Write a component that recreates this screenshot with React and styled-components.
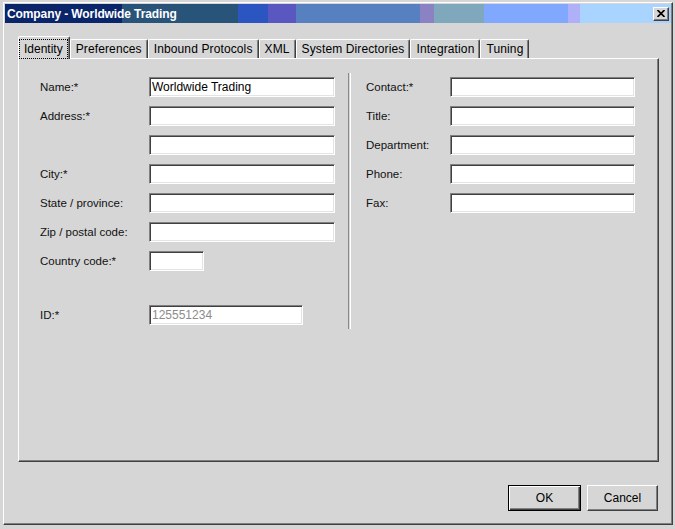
import React from 'react';
import styled, { createGlobalStyle } from 'styled-components';

const GlobalStyle = createGlobalStyle`
  html, body {
    margin: 0;
    padding: 0;
    background: #d6d6d6;
  }
  body {
    font-family: "Liberation Sans", Arial, sans-serif;
    color: #000;
  }
`;

const Window = styled.div`
  box-sizing: border-box;
  width: 670px;
  height: 523px;
  margin: 2px 0 0 3px;
  padding: 1px;
  display: flex;
  flex-direction: column;
  background: #d6d6d6;
  border: 1px solid;
  border-color: #ffffff #404040 #404040 #ffffff;
  box-shadow: inset -1px -1px 0 #808080;
`;

const TitleBar = styled.div`
  height: 19px;
  display: flex;
  align-items: center;
  padding-left: 2px;
  background: linear-gradient(
    to right,
    #0b256b 0px, #0b256b 117px,
    #29547a 117px, #29547a 233px,
    #2b55c0 233px, #2b55c0 263px,
    #5a58c0 263px, #5a58c0 291px,
    #5680c0 291px, #5680c0 415px,
    #8a82c2 415px, #8a82c2 429px,
    #80a8bc 429px, #80a8bc 479px,
    #80a8ff 479px, #80a8ff 563px,
    #b0b0f8 563px, #b0b0f8 575px,
    #a8d4ff 575px, #a8d4ff 100%
  );
`;

const TitleText = styled.span`
  color: #fff;
  font-weight: bold;
  font-size: 12px;
  letter-spacing: -0.1px;
  white-space: nowrap;
`;

const CloseButton = styled.div`
  box-sizing: border-box;
  margin-left: auto;
  margin-right: 2px;
  width: 16px;
  height: 14px;
  display: flex;
  align-items: center;
  justify-content: center;
  background: #d6d6d6;
  border: 1px solid;
  border-color: #ffffff #404040 #404040 #ffffff;
  box-shadow: inset -1px -1px 0 #808080;
`;

const Body = styled.div`
  flex: 1;
  display: flex;
  flex-direction: column;
  padding: 13px 12px 0 13px;
`;

const TabStrip = styled.div`
  height: 22px;
  display: flex;
  align-items: flex-end;
`;

const Tab = styled.div`
  box-sizing: border-box;
  position: relative;
  z-index: ${p => (p.$active ? 2 : 0)};
  height: ${p => (p.$active ? 23 : 19)}px;
  margin-bottom: ${p => (p.$active ? -1 : 0)}px;
  padding: ${p => (p.$active ? '2px 1px 0 0' : '0')};
  display: flex;
  background: #d6d6d6;
  border-top: 1px solid #fff;
  border-left: 1px solid #fff;
  border-right: 1px solid #404040;
  border-radius: 2px 2px 0 0;
  box-shadow: inset -1px 0 0 #808080;
  font-size: 12px;
  letter-spacing: ${p => (p.$active ? 0 : 0.12)}px;
  white-space: nowrap;
`;

const TabLabel = styled.span`
  display: flex;
  align-items: center;
  padding: 0 4px 1px 4px;
  border: 1px ${p => (p.$focused ? 'dotted #000' : 'solid transparent')};
`;

const Panel = styled.div`
  box-sizing: border-box;
  height: 404px;
  padding: 14px 0 0 21px;
  border: 1px solid;
  border-color: #ffffff #404040 #404040 #ffffff;
  box-shadow: inset -1px -1px 0 #808080;
`;

const Columns = styled.div`
  display: flex;
  align-items: stretch;
`;

const Column = styled.div`
  display: flex;
  flex-direction: column;
  padding: 4px 0;
`;

const Separator = styled.div`
  width: 1px;
  margin: 0 15px 0 13px;
  border-left: 1px solid #8a8a8a;
  border-right: 1px solid #ffffff;
`;

const Row = styled.div`
  display: flex;
  align-items: center;
  height: 20px;
  margin-top: ${p => p.$top || 0}px;
  margin-bottom: 9px;
  &:last-child {
    margin-bottom: 0;
  }
`;

const Label = styled.label`
  width: ${p => p.$width}px;
  font-size: 11.5px;
  color: #111;
  white-space: nowrap;
`;

const Field = styled.input`
  box-sizing: border-box;
  width: ${p => p.$width}px;
  height: 20px;
  margin: 0;
  padding: 0 2px;
  font-family: "Liberation Sans", Arial, sans-serif;
  font-size: 12px;
  color: ${p => (p.$disabled ? '#8c8c8c' : '#000')};
  background: #fff;
  border: 1px solid;
  border-color: #808080 #ffffff #ffffff #808080;
  box-shadow: inset 1px 1px 0 #404040, inset -1px -1px 0 #e4e4e4;
  outline: none;
`;

const ButtonRow = styled.div`
  display: flex;
  justify-content: flex-end;
  gap: 6px;
  margin-top: 23px;
  padding-right: 1px;
`;

const Button = styled.button`
  box-sizing: border-box;
  width: ${p => p.$width}px;
  height: 26px;
  margin: 0;
  padding: 0;
  font-family: "Liberation Sans", Arial, sans-serif;
  font-size: 12px;
  color: #000;
  background: #d6d6d6;
  border: 1px solid;
  border-color: ${p => (p.$default ? '#000' : '#ffffff #404040 #404040 #ffffff')};
  box-shadow: ${p =>
    p.$default
      ? 'inset 1px 1px 0 #fff, inset -1px -1px 0 #404040, inset -2px -2px 0 #808080'
      : 'inset -1px -1px 0 #808080'};
`;

const tabs = [
  'Identity',
  'Preferences',
  'Inbound Protocols',
  'XML',
  'System Directories',
  'Integration',
  'Tuning',
];

const leftFields = [
  { label: 'Name:*', width: 186, value: 'Worldwide Trading' },
  { label: 'Address:*', width: 186 },
  { label: '', width: 186 },
  { label: 'City:*', width: 186 },
  { label: 'State / province:', width: 186 },
  { label: 'Zip / postal code:', width: 186 },
  { label: 'Country code:*', width: 55 },
  { label: 'ID:*', width: 154, value: '125551234', disabled: true, top: 25 },
];

const rightFields = ['Contact:*', 'Title:', 'Department:', 'Phone:', 'Fax:'];

const CloseIcon = () => (
  <svg width="8" height="7" viewBox="0 0 8 7">
    <path d="M0.5 0 L7.5 7 M7.5 0 L0.5 7" stroke="#000" strokeWidth="1.7" fill="none" />
  </svg>
);

export default function App() {
  return (
    <>
      <GlobalStyle />
      <Window>
        <TitleBar>
          <TitleText>Company - Worldwide Trading</TitleText>
          <CloseButton>
            <CloseIcon />
          </CloseButton>
        </TitleBar>
        <Body>
          <TabStrip>
            {tabs.map((t, i) => (
              <Tab key={t} $active={i === 0}>
                <TabLabel $focused={i === 0}>{t}</TabLabel>
              </Tab>
            ))}
          </TabStrip>
          <Panel>
            <Columns>
              <Column>
                {leftFields.map((f, i) => (
                  <Row key={i} $top={f.top}>
                    <Label $width={109}>{f.label}</Label>
                    <Field
                      $width={f.width}
                      $disabled={f.disabled}
                      defaultValue={f.value || ''}
                      readOnly={f.disabled}
                    />
                  </Row>
                ))}
              </Column>
              <Separator />
              <Column>
                {rightFields.map(l => (
                  <Row key={l}>
                    <Label $width={84}>{l}</Label>
                    <Field $width={185} defaultValue="" />
                  </Row>
                ))}
              </Column>
            </Columns>
          </Panel>
          <ButtonRow>
            <Button $width={73} $default>OK</Button>
            <Button $width={71}>Cancel</Button>
          </ButtonRow>
        </Body>
      </Window>
    </>
  );
}
